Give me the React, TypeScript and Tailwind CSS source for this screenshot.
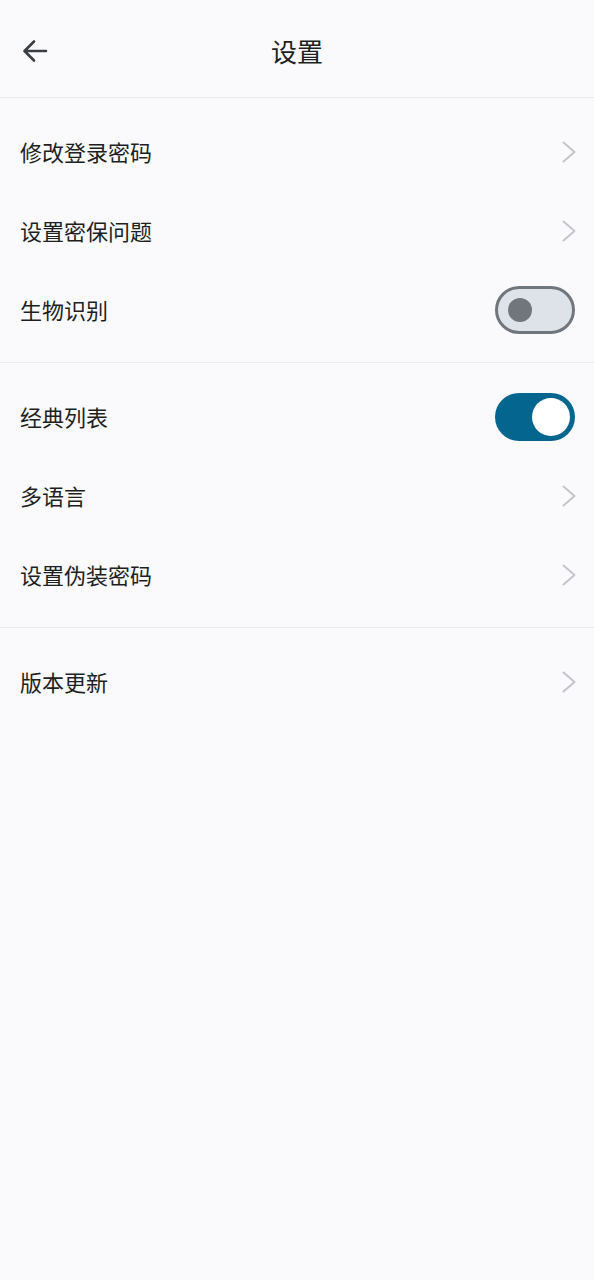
const font = { fontFamily: '"Noto Sans CJK SC", "Noto Sans", sans-serif' };

const Chevron = () => (
  <svg width="14" height="22" viewBox="0 0 14 22" fill="none" className="shrink-0">
    <path d="M1.5 1.5L12.5 11L1.5 20.5" stroke="#c4c5ca" strokeWidth="2" strokeLinecap="round" strokeLinejoin="round" />
  </svg>
);

const Toggle = ({ on }: { on: boolean }) =>
  on ? (
    <div className="w-20 h-12 rounded-full bg-[#04668f] flex items-center justify-end pr-[5px]">
      <div className="w-[38px] h-[38px] rounded-full bg-white" />
    </div>
  ) : (
    <div className="w-20 h-12 rounded-full bg-[#dee3ea] border-[3px] border-[#71767d] flex items-center pl-[10px]">
      <div className="w-6 h-6 rounded-full bg-[#71767d]" />
    </div>
  );

type Item = { label: string; toggle?: boolean; on?: boolean };

const Row = ({ item }: { item: Item }) => (
  <div className={`h-[79px] pb-[2px] flex items-center justify-between pl-5 ${item.toggle ? "pr-[19px]" : "pr-[18px]"}`}>
    <span className="text-[22px] leading-[30px] text-[#1d1f23] -mt-[1px]">{item.label}</span>
    {item.toggle ? <Toggle on={!!item.on} /> : <Chevron />}
  </div>
);

const sections: Item[][] = [
  [{ label: "修改登录密码" }, { label: "设置密保问题" }, { label: "生物识别", toggle: true, on: false }],
  [{ label: "经典列表", toggle: true, on: true }, { label: "多语言" }, { label: "设置伪装密码" }],
  [{ label: "版本更新" }],
];

export default function App() {
  return (
    <div className="w-[594px] min-h-[1280px] bg-[#fafafc]" style={font}>
      <header className="h-[98px] pt-[4px] flex items-center relative border-b border-[#ebebef]">
        <button className="pl-[22px] pr-2 py-2">
          <svg width="26" height="26" viewBox="0 0 26 26" fill="none">
            <path d="M24 13H3M12 3.5L2.5 13L12 22.5" stroke="#3a3d42" strokeWidth="2.6" strokeLinecap="round" strokeLinejoin="round" />
          </svg>
        </button>
        <h1 className="absolute left-1/2 -translate-x-1/2 text-[26px] text-[#1d1f23]">设置</h1>
      </header>
      {sections.map((items, i) => (
        <section key={i} className={`pt-[15px] pb-[12px] ${i < sections.length - 1 ? "border-b border-[#ebebef]" : ""}`}>
          {items.map((it) => (
            <Row key={it.label} item={it} />
          ))}
        </section>
      ))}
    </div>
  );
}
